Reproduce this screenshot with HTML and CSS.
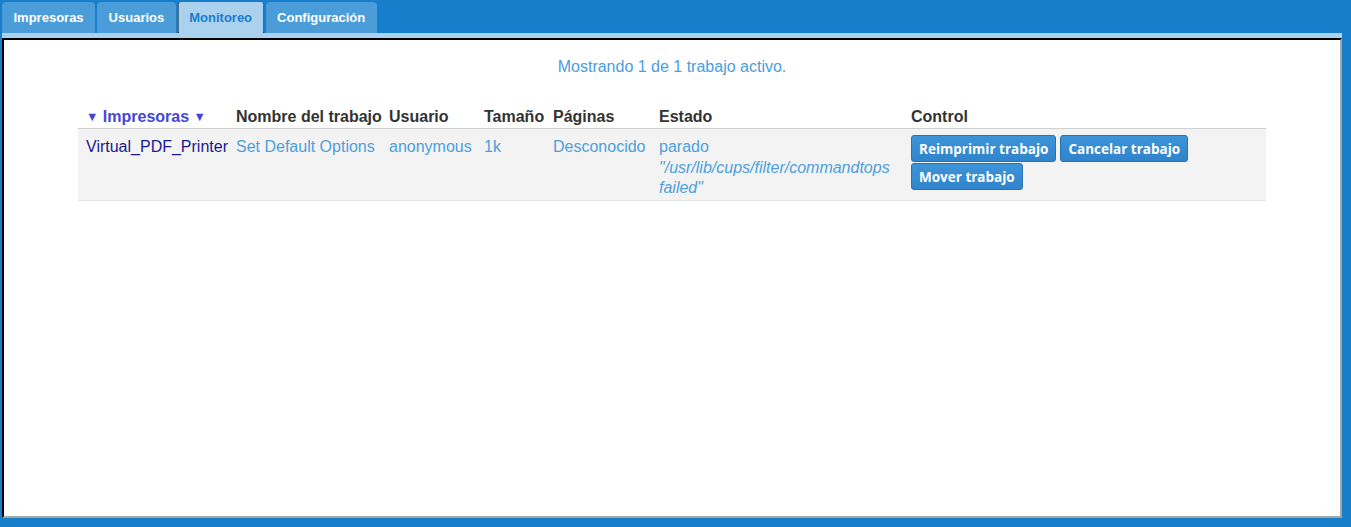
FILE: index.html
```html
<!DOCTYPE html>
<html lang="es">
<head>
<meta charset="utf-8">
<title>Trabajos - CUPS</title>
<link rel="stylesheet" href="styles.css">
</head>
<body>
<nav class="tabs">
  <a class="tab">Impresoras</a>
  <a class="tab">Usuarios</a>
  <a class="tab active">Monitoreo</a>
  <a class="tab">Configuración</a>
</nav>
<div class="strip"></div>
<main class="frame">
  <p class="summary">Mostrando 1 de 1 trabajo activo.</p>
  <table class="list">
    <colgroup>
      <col class="c1"><col class="c2"><col class="c3"><col class="c4"><col class="c5"><col class="c6"><col class="c7">
    </colgroup>
    <thead>
      <tr>
        <th class="first"><span class="sort"><span class="tri">▼</span> Impresoras <span class="tri">▼</span></span></th>
        <th>Nombre del trabajo</th>
        <th>Usuario</th>
        <th>Tamaño</th>
        <th>Páginas</th>
        <th>Estado</th>
        <th>Control</th>
      </tr>
    </thead>
    <tbody>
      <tr>
        <td class="first"><span class="printer">Virtual_PDF_Printer</span></td>
        <td>Set Default Options</td>
        <td>anonymous</td>
        <td>1k</td>
        <td>Desconocido</td>
        <td>parado<br><em>"/usr/lib/cups/filter/commandtops failed"</em></td>
        <td>
          <div class="controls">
            <button class="btn">Reimprimir trabajo</button>
            <button class="btn">Cancelar trabajo</button>
            <button class="btn">Mover trabajo</button>
          </div>
        </td>
      </tr>
    </tbody>
  </table>
</main>
</body>
</html>
```
FILE: styles.css
```css
html, body {
  margin: 0;
  height: 100%;
}
body {
  padding: 2px;
  box-sizing: border-box;
  background: #167ecb;
  font-family: "Liberation Sans", Arial, sans-serif;
}
.tabs {
  display: flex;
  gap: 2px;
  height: 31px;
}
.tab {
  display: block;
  padding: 1px 11.5px 0;
  line-height: 30px;
  background: #4b9dd9;
  color: #fff;
  font-weight: bold;
  font-size: 13px;
  border-radius: 4px 4px 0 0;
}
.tab.active {
  background: #aad2ef;
  color: #1b7ccc;
  padding: 1px 10.5px 0;
  border-left: 1px dotted #000;
  border-right: 1px dotted #000;
  border-radius: 3px 3px 0 0;
}
.strip {
  width: 1340px;
  height: 5px;
  background: #aad2ef;
}
.frame {
  display: block;
  width: 1340px;
  height: 480px;
  box-sizing: border-box;
  border: 2px solid;
  border-color: #000 #a6a6a6 #a6a6a6 #000;
  background: #fff;
  overflow: hidden;
}
.summary {
  margin: 17px 0 0;
  text-align: center;
  color: #4a9ddb;
  font-size: 16px;
  line-height: 20px;
}
.list {
  margin: 28px auto 0;
  width: 1188px;
  border-collapse: collapse;
  table-layout: fixed;
  font-size: 16px;
  line-height: 20.5px;
}
.c1 { width: 154px; }
.c2 { width: 153px; }
.c3 { width: 95px; }
.c4 { width: 69px; }
.c5 { width: 106px; }
.c6 { width: 252px; }
.c7 { width: 359px; }
.list th, .list td {
  box-sizing: border-box;
  text-align: left;
  vertical-align: top;
}
.list th {
  padding: 2px 4px 1px;
  line-height: 20px;
  color: #333;
  font-weight: bold;
  border-bottom: 1px solid #cfcfcf;
  white-space: nowrap;
}
.list td {
  padding: 8px 4px 1px;
  background: #f3f3f3;
  color: #4d9fdc;
  border-bottom: 1px solid #e4e4e4;
}
.list th.first, .list td.first {
  padding-left: 8px;
}
.sort {
  color: #4646d6;
}
.tri {
  font-size: 12.5px;
  vertical-align: 1px;
}
.printer {
  color: #1a1a8f;
}
.controls {
  display: flex;
  flex-wrap: wrap;
  gap: 1px 4px;
  margin-top: -2px;
}
.btn {
  height: 27px;
  padding: 0 7px;
  margin: 0;
  font-family: "Open Sans", "DejaVu Sans", sans-serif;
  font-weight: bold;
  font-size: 13.5px;
  color: #fff;
  background: linear-gradient(#3e94d9, #2f84cb);
  border: 1px solid #2a72b2;
  border-radius: 3px;
}
```
